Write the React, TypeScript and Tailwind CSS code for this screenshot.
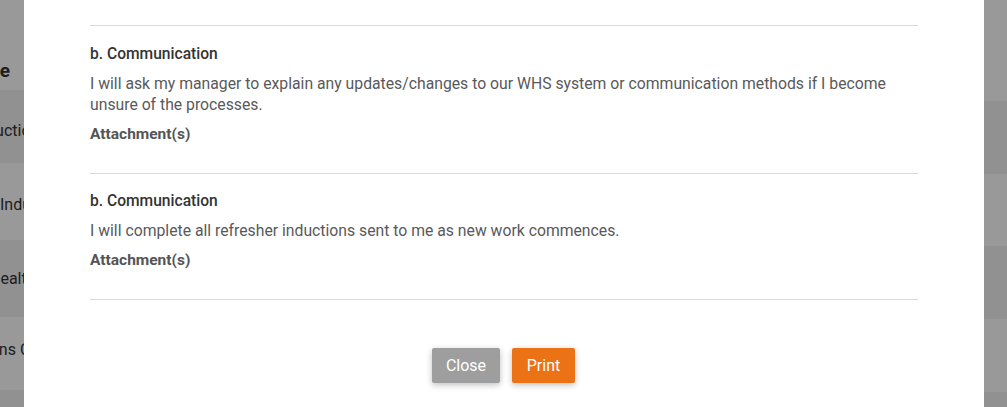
export default function App() {
  const rowL = "flex items-center whitespace-nowrap";
  return (
    <div className="relative h-[407px] w-[1007px] overflow-hidden font-['Roboto',sans-serif]">
      {/* background page */}
      <div className="flex h-full w-full justify-between bg-white">
        <div className="flex w-[24px] flex-col overflow-hidden text-[16px] text-[#333]">
          <div className="flex h-[90px] shrink-0 items-end bg-white pb-[5px]">
            <div className="flex w-[10px] shrink-0 justify-end text-[19px] font-bold">
              <span className="whitespace-nowrap">Title</span>
            </div>
          </div>
          <div className={`${rowL} h-[73px] shrink-0 bg-[#f2f2f2] pt-[9px]`}>
            <span className="-ml-[37px]">Instruction</span>
          </div>
          <div className={`${rowL} h-[77px] shrink-0 bg-white pt-[6px]`}>
            <span>Induction</span>
          </div>
          <div className={`${rowL} h-[77px] shrink-0 bg-[#f2f2f2]`}>
            <span className="-ml-[11px]">Health</span>
          </div>
          <div className={`${rowL} h-[73px] shrink-0 bg-white pb-[8px]`}>
            <span className="-ml-[56px]">Questions Checklist</span>
          </div>
          <div className="h-[40px] shrink-0 bg-[#f2f2f2]" />
        </div>
        <div className="flex w-[23px] flex-col">
          <div className="h-[101px] shrink-0 bg-white" />
          <div className="h-[73px] shrink-0 bg-[#f2f2f2]" />
          <div className="h-[72px] shrink-0 bg-white" />
          <div className="h-[73px] shrink-0 bg-[#f2f2f2]" />
          <div className="h-[73px] shrink-0 bg-white" />
          <div className="h-[40px] shrink-0 bg-[#f2f2f2]" />
        </div>
      </div>

      {/* backdrop */}
      <div className="absolute inset-0 bg-black/40" />

      {/* modal */}
      <div className="absolute bottom-0 left-[24px] top-0 w-[960px] bg-white px-[66px] pt-[25px]">
        <div className="border-t border-[#d9d9d9] pb-[28px] pt-[17px]">
          <div className="text-[15.6px] font-medium leading-[22px] text-[#333]">b. Communication</div>
          <p className="mt-[8px] text-[15.75px] leading-[21px] text-[#59595b]">
            I will ask my manager to explain any updates/changes to our WHS system or communication methods if I become unsure of the processes.
          </p>
          <div className="mt-[8px] text-[15.5px] font-bold leading-[22px] text-[#555]">Attachment(s)</div>
        </div>
        <div className="border-t border-[#d9d9d9] pb-[28px] pt-[16px]">
          <div className="text-[15.6px] font-medium leading-[22px] text-[#333]">b. Communication</div>
          <p className="mt-[8px] text-[15.75px] leading-[21px] text-[#59595b]">
            I will complete all refresher inductions sent to me as new work commences.
          </p>
          <div className="mt-[8px] text-[15.5px] font-bold leading-[22px] text-[#555]">Attachment(s)</div>
        </div>
        <div className="border-t border-[#d9d9d9]" />
        <div className="mt-[48px] flex justify-center gap-[12px] pr-[1px]">
          <button className="h-[35px] w-[68px] rounded-[2px] bg-[#9e9e9e] text-[16px] text-white shadow-[0_2px_6px_rgba(0,0,0,0.25)]">
            Close
          </button>
          <button className="h-[35px] w-[63px] rounded-[2px] bg-[#ec7216] text-[16px] text-white shadow-[0_2px_6px_rgba(0,0,0,0.25)]">
            Print
          </button>
        </div>
      </div>
    </div>
  );
}
